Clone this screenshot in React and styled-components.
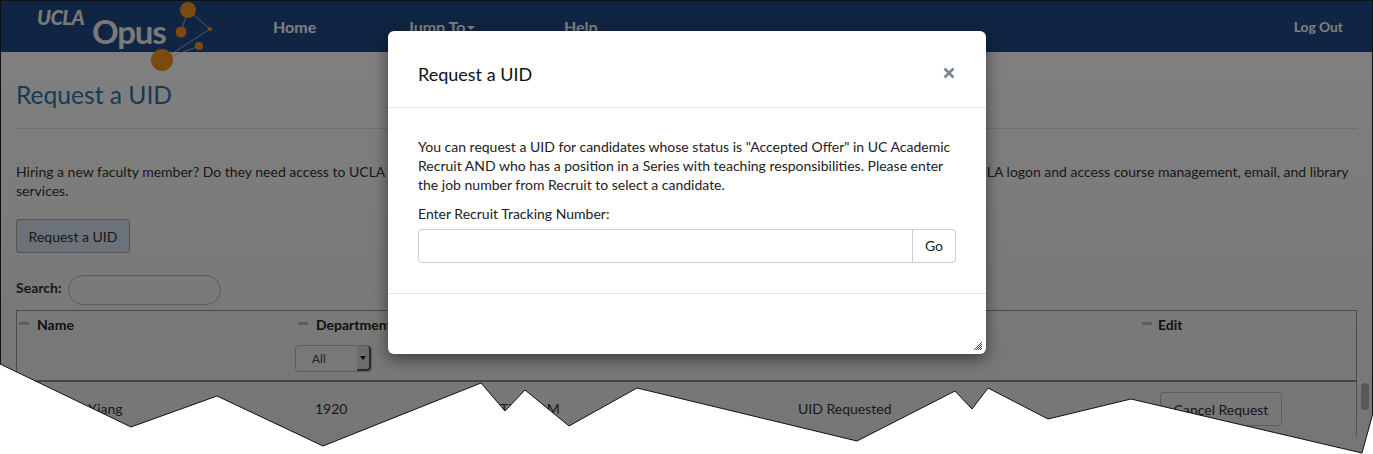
import React from "react";
import styled, { createGlobalStyle } from "styled-components";

const Global = createGlobalStyle`
  html, body { margin: 0; padding: 0; background: #fff; }
  body { font-family: Lato, "Open Sans", sans-serif; font-size: 14px; color: #333; }
  * { box-sizing: border-box; }
`;

const Frame = styled.div`
  position: relative;
  width: 1373px;
  height: 454px;
  overflow: hidden;
  background: #fff;
`;
const Header = styled.header`
  height: 52px;
  background: #204a86;
  display: flex;
  align-items: center;
  color: #fff;
  font-size: 16px;
  font-weight: 700;
  padding: 0 30px 0 37px;
`;
const LogoBox = styled.div`
  position: relative;
  width: 236px;
  height: 52px;
  flex: none;
`;
const LogoArt = styled.svg`
  position: absolute;
  left: 0;
  top: 0;
  overflow: visible;
`;
const Ucla = styled.span`
  position: absolute;
  left: 0;
  top: 5px;
  font-size: 20px;
  font-style: italic;
  font-weight: 900;
  letter-spacing: -0.5px;
  color: #f2f2f2;
`;
const Opus = styled.span`
  position: absolute;
  left: 55px;
  top: 10px;
  font-size: 33px;
  line-height: 42px;
  font-weight: 700;
  letter-spacing: -1.2px;
  color: #f2f2f2;
`;
const NavLink = styled.a`
  width: ${(p) => p.$w}px;
  flex: none;
  font-size: 16px;
  line-height: 20px;
  margin-top: 1px;
`;
const Caret = styled.i`
  display: inline-block;
  margin-left: 2px;
  vertical-align: middle;
  border-left: 4px solid transparent;
  border-right: 4px solid transparent;
  border-top: 4px solid currentColor;
`;
const LogOut = styled.a`
  margin-left: auto;
  font-size: 13.8px;
  font-weight: 700;
`;
const Main = styled.main`
  height: 402px;
  padding: 0 16px;
  background: linear-gradient(#fff, #ececec);
`;
const Title = styled.h1`
  margin: 0;
  height: 77px;
  padding-top: 27px;
  border-bottom: 1px solid #ddd;
  font-size: 24.6px;
  line-height: 32px;
  font-weight: 400;
  color: #2d77ac;
`;
const Intro = styled.p`
  margin: 33px 0 0;
  font-size: 14px;
  line-height: 19px;
  color: #333;
`;
const GhostButton = styled.button`
  display: block;
  font: inherit;
  color: #333;
  background: ${(p) => p.$bg || "transparent"};
  border: 1px solid #a8a8a8;
  border-radius: 3px;
  height: 34px;
  width: ${(p) => p.$w}px;
  padding: 0;
`;
const ActionRow = styled.div`
  margin-top: 19px;
`;
const SearchRow = styled.label`
  display: flex;
  align-items: center;
  gap: 6px;
  margin-top: 22px;
  height: 30px;
  font-weight: 700;
`;
const SearchLabel = styled.span`
  padding-bottom: 6px;
`;
const SearchInput = styled.div`
  width: 153px;
  height: 30px;
  border: 1px solid #b5b5b5;
  border-radius: 15px;
`;
const TableHead = styled.div`
  display: grid;
  grid-template-columns: 279px 244px 0 1fr 216px;
  margin-top: 5px;
  height: 72px;
  border: 1px solid #999;
  border-bottom: 2px solid #888;
`;
const HeadCell = styled.div`
  position: relative;
  padding: 5px 0 0 ${(p) => p.$pad || 20}px;
  font-weight: 700;
  color: #222;
  white-space: nowrap;
`;
const SortMark = styled.i`
  position: absolute;
  left: 2px;
  top: 11px;
  width: 10px;
  height: 3px;
  background: #bbb;
`;
const SelectBox = styled.div`
  display: flex;
  align-items: stretch;
  margin: 12px 0 0 -21px;
  width: 77px;
  height: 27px;
  border: 1px solid #bbb;
  border-radius: 4px;
  font-size: 12px;
  font-weight: 400;
  color: #444;
`;
const SelectValue = styled.span`
  flex: 1;
  padding-left: 16px;
  line-height: 25px;
`;
const SelectArrow = styled.span`
  width: 14px;
  display: flex;
  align-items: center;
  justify-content: center;
  background: #d8d8d8;
  border-right: 2px solid #555;
  border-bottom: 2px solid #555;
  border-radius: 0 4px 4px 0;
  &::after {
    content: "";
    border-left: 3px solid transparent;
    border-right: 3px solid transparent;
    border-top: 4px solid #111;
  }
`;
const BodyRow = styled.div`
  display: grid;
  grid-template-columns: 278px 185px 298px 362px 1fr;
  align-items: center;
  height: 55px;
  padding-left: 21px;
  color: #333;
  white-space: nowrap;
  border-right: 1px solid #aaa;
  border-bottom: 1px solid #e0e0e0;
`;
const RowText = styled.span`
  padding-bottom: 2px;
`;
const CancelButton = styled(GhostButton)`
  width: 122px;
  height: 34px;
  border-color: #bbb;
`;
const ScrollThumb = styled.div`
  position: absolute;
  left: 1361px;
  top: 383px;
  width: 8px;
  height: 27px;
  border-radius: 4px;
  background: #b0b0b0;
`;
const Backdrop = styled.div`
  position: absolute;
  inset: 0;
  background: rgba(0, 0, 0, 0.5);
`;
const Modal = styled.section`
  position: absolute;
  left: 388px;
  top: 31px;
  width: 598px;
  height: 323px;
  background: #fff;
  border-radius: 6px;
  box-shadow: 0 5px 15px rgba(0, 0, 0, 0.5);
  display: flex;
  flex-direction: column;
  color: #222;
`;
const ModalHead = styled.div`
  height: 77px;
  flex: none;
  display: flex;
  align-items: center;
  justify-content: space-between;
  padding: 9px 30px 0;
  border-bottom: 1px solid #e5e5e5;
`;
const ModalTitle = styled.h2`
  margin: 0;
  font-size: 18px;
  font-weight: 400;
  color: #111;
`;
const CloseX = styled.svg`
  margin: -2px 1px 0 0;
`;
const ModalBody = styled.div`
  height: 186px;
  flex: none;
  padding: 29px 30px 0;
  border-bottom: 1px solid #e5e5e5;
`;
const ModalText = styled.p`
  margin: 0;
  font-size: 14px;
  line-height: 19px;
`;
const FieldLabel = styled.div`
  margin-top: 10px;
  line-height: 19px;
`;
const InputGroup = styled.div`
  display: flex;
  margin-top: 6px;
  height: 34px;
  border: 1px solid #ccc;
  border-radius: 4px;
`;
const InputField = styled.div`
  flex: 1;
  border-right: 1px solid #ccc;
`;
const GoButton = styled.div`
  width: 42px;
  text-align: center;
  line-height: 32px;
`;
const ResizeGrip = styled.svg`
  position: absolute;
  right: 4px;
  bottom: 4px;
`;
const Tear = styled.svg`
  position: absolute;
  left: 0;
  top: 0;
  pointer-events: none;
`;
const EdgeFrame = styled.div`
  position: absolute;
  left: 0;
  top: 0;
  width: 1373px;
  height: 420px;
  border: solid #111;
  border-width: 1px 1px 0 1px;
  pointer-events: none;
`;

const tearPoints =
  "-2,363 131,427 217,396 323,446 481,383 505,411 525,390 569,426 637,388 857,441 955,391 972,409 988,388 1048,419 1131,399 1362,453 1373,413";

export default function App() {
  return (
    <Frame>
      <Global />
      <Header>
        <LogoBox>
          <LogoArt width="180" height="80" viewBox="0 0 180 80">
            <g stroke="#d0d0d0" strokeWidth="0.8" fill="none">
              <path d="M151 10 173 29 125 60 162 46" />
              <path d="M151 10 144 32" />
            </g>
            <g fill="#f7941d">
              <circle cx="151" cy="10" r="8" />
              <circle cx="144" cy="32" r="5.5" />
              <circle cx="173" cy="29" r="2" />
              <circle cx="162" cy="46" r="4" />
              <circle cx="125" cy="60" r="11" />
            </g>
          </LogoArt>
          <Ucla>UCLA</Ucla>
          <Opus>Opus</Opus>
        </LogoBox>
        <NavLink $w={134}>Home</NavLink>
        <NavLink $w={157}>Jump To<Caret /></NavLink>
        <NavLink $w={100}>Help</NavLink>
        <LogOut>Log Out</LogOut>
      </Header>
      <Main>
        <Title>Request a UID</Title>
        <Intro>
          Hiring a new faculty member? Do they need access to UCLA systems before their first start date and appointment? Request a UID so that they can create a UCLA logon and access course management, email, and library services.
        </Intro>
        <ActionRow>
          <GhostButton $w={114} $bg="#d9e5f5">Request a UID</GhostButton>
        </ActionRow>
        <SearchRow>
          <SearchLabel>Search:</SearchLabel>
          <SearchInput />
        </SearchRow>
        <TableHead>
          <HeadCell><SortMark />Name</HeadCell>
          <HeadCell>
            <SortMark />Department
            <SelectBox>
              <SelectValue>All</SelectValue>
              <SelectArrow />
            </SelectBox>
          </HeadCell>
          <HeadCell />
          <HeadCell />
          <HeadCell $pad={18}><SortMark />Edit</HeadCell>
        </TableHead>
        <BodyRow>
          <RowText>Zhangs, Xiang</RowText>
          <RowText>1920</RowText>
          <RowText>TBDSOM</RowText>
          <RowText>UID Requested</RowText>
          <CancelButton>Cancel Request</CancelButton>
        </BodyRow>
      </Main>
      <ScrollThumb />
      <Backdrop />
      <Modal>
        <ModalHead>
          <ModalTitle>Request a UID</ModalTitle>
          <CloseX width="12" height="12" viewBox="0 0 12 12">
            <path d="M1.5 1.5 10.5 10.5M10.5 1.5 1.5 10.5" stroke="#7c8591" strokeWidth="2.6" />
          </CloseX>
        </ModalHead>
        <ModalBody>
          <ModalText>
            You can request a UID for candidates whose status is "Accepted Offer" in UC Academic Recruit AND who has a position in a Series with teaching responsibilities. Please enter the job number from Recruit to select a candidate.
          </ModalText>
          <FieldLabel>Enter Recruit Tracking Number:</FieldLabel>
          <InputGroup>
            <InputField />
            <GoButton>Go</GoButton>
          </InputGroup>
        </ModalBody>
        <ResizeGrip width="8" height="8" viewBox="0 0 8 8">
          <path d="M0 8 8 0M2 8 8 2M4 8 8 4M6 8 8 6" stroke="#444" strokeWidth="1" />
        </ResizeGrip>
      </Modal>
      <EdgeFrame />
      <Tear width="1373" height="454" viewBox="0 0 1373 454">
        <polygon points={`${tearPoints} 1375,456 -2,456`} fill="#fff" />
        <polyline points={tearPoints} fill="none" stroke="#111" strokeWidth="1" />
      </Tear>
    </Frame>
  );
}
